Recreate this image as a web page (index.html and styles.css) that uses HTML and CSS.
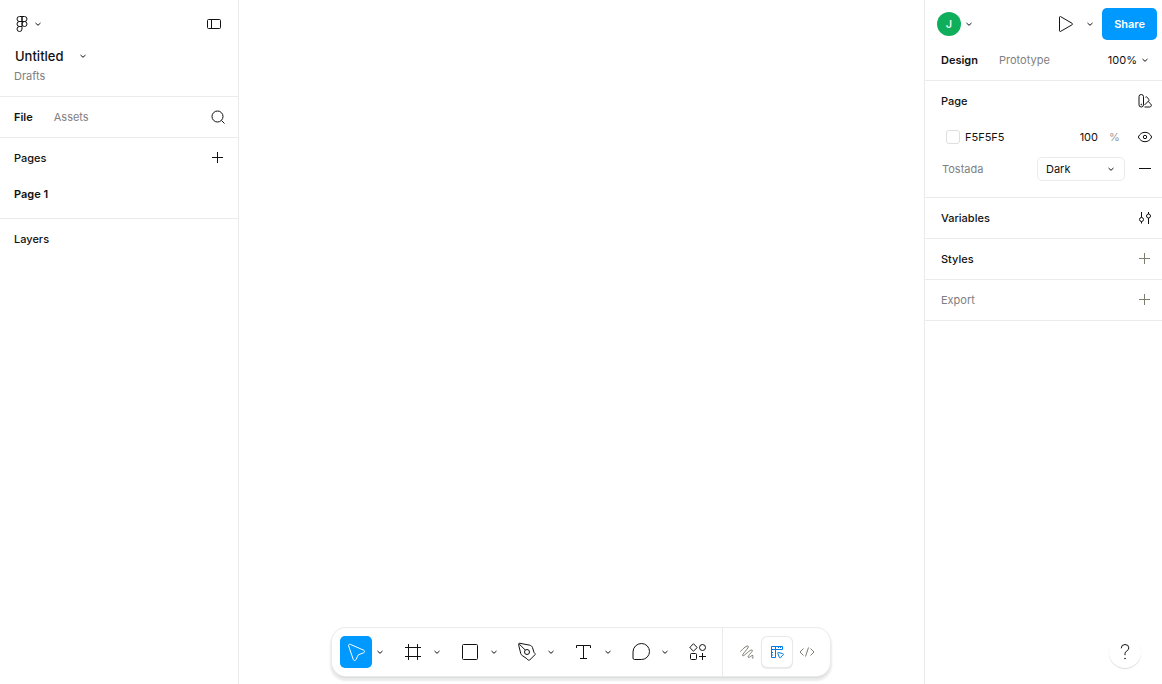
FILE: index.html
```html
<!DOCTYPE html>
<html lang="en">
<head>
<meta charset="utf-8">
<meta name="viewport" content="width=device-width, initial-scale=1">
<title>Untitled</title>
<link rel="stylesheet" href="styles.css">
</head>
<body>
<svg class="defs" aria-hidden="true">
  <symbol id="chevron" viewBox="0 0 8 8"><path d="M1.5 3 4 5.3 6.5 3"/></symbol>
  <symbol id="plus" viewBox="0 0 24 24"><path d="M11.500 6v11M6 11.500h11"/></symbol>
</svg>
<div class="app">
  <aside class="panel left">
    <header class="file-header">
      <div class="row bar">
        <button class="menu" aria-label="Main menu">
          <svg class="icon" viewBox="0 0 24 24"><path d="M12 4.500H9.500a2.500 2.500 0 0 0 0 5H12zM12 4.500h2.500a2.500 2.500 0 0 1 0 5H12zM12 9.500H9.500a2.500 2.500 0 0 0 0 5H12zM12 14.500H9.500a2.500 2.500 0 1 0 2.500 2.500z"/><circle cx="14.500" cy="12" r="2.500"/></svg>
          <svg class="chev"><use href="#chevron"/></svg>
        </button>
        <button aria-label="Minimize UI"><svg class="icon" viewBox="0 0 24 24"><rect x="5.500" y="7.500" width="13" height="9" rx="1"/><path d="M9.500 7.500v9"/></svg></button>
      </div>
      <button class="title">Untitled <svg class="chev"><use href="#chevron"/></svg></button>
      <a class="muted location" href="#">Drafts</a>
    </header>
    <section class="row section">
      <nav class="tabs"><a class="active" href="#">File</a><a class="muted" href="#">Assets</a></nav>
      <button aria-label="Find"><svg class="icon" viewBox="0 0 24 24"><circle cx="11.500" cy="11.500" r="5.500"/><path d="m15.500 15.500 3 3"/></svg></button>
    </section>
    <section class="pages">
      <div class="row line"><h2>Pages</h2><button aria-label="Add new page"><svg class="icon"><use href="#plus"/></svg></button></div>
      <a class="page" href="#">Page 1</a>
    </section>
    <section class="row line"><h2>Layers</h2></section>
  </aside>

  <main class="canvas"></main>

  <aside class="panel right">
    <header class="user-header">
      <div class="row bar">
        <button class="user" aria-label="Account"><span class="avatar">J</span><svg class="chev"><use href="#chevron"/></svg></button>
        <div class="actions">
          <button aria-label="Present"><svg class="icon" viewBox="0 0 24 24"><path d="M5.500 5.200v13.600c0 .6.600.9 1.100.6l11.600-6.700c.5-.3.500-1 0-1.300L6.600 4.600c-.5-.3-1.100 0-1.100.6z"/></svg></button>
          <button class="chev-button" aria-label="Present options"><svg class="chev"><use href="#chevron"/></svg></button>
          <button class="share">Share</button>
        </div>
      </div>
      <div class="row mode-row">
        <nav class="tabs"><a class="active" href="#">Design</a><a class="muted" href="#">Prototype</a></nav>
        <button class="zoom">100% <svg class="chev"><use href="#chevron"/></svg></button>
      </div>
    </header>
    <section class="page-props">
      <div class="row line"><h2>Page</h2><button aria-label="Apply styles"><svg class="icon" viewBox="0 0 24 24"><rect x="6" y="5.500" width="4.500" height="12.500" rx="2.200"/><path d="M12.500 8.200q1-.8 1.800.2l1.500 2.100q.5.700-.1 1.300L11.500 16M15.200 12.500l2.500 2.400q.8.900.6 1.800-.3 1.300-1.800 1.300h-5"/><circle cx="8.300" cy="15.500" r=".4"/></svg></button></div>
      <div class="fill-row">
        <span class="swatch"></span>
        <input class="hex" aria-label="Color" value="F5F5F5">
        <input class="opacity" aria-label="Opacity" value="100">
        <span class="percent">%</span>
        <button aria-label="Hide"><svg class="icon" viewBox="0 0 24 24"><path d="M5.300 12q2.300-4.700 6.700-4.700t6.700 4.700q-2.300 4.700-6.700 4.700T5.300 12z"/><circle cx="12" cy="12" r="1.700"/></svg></button>
      </div>
      <div class="mode">
        <label class="muted" for="theme">Tostada</label>
        <div class="select-box"><select id="theme"><option>Dark</option><option>Light</option></select><svg class="chev"><use href="#chevron"/></svg></div>
        <button aria-label="Remove mode"><svg class="icon" viewBox="0 0 24 24"><path d="M6 11.500h12"/></svg></button>
      </div>
    </section>
    <section class="row section"><h2>Variables</h2><button aria-label="Open variables"><svg class="icon" viewBox="0 0 24 24"><path d="M8.500 6v5.500M8.500 15.500v2M15.500 6v2M15.500 12v6"/><circle cx="8.500" cy="13.500" r="2"/><circle cx="15.500" cy="10" r="2"/></svg></button></section>
    <section class="row section"><h2>Styles</h2><button class="subtle" aria-label="Add style"><svg class="icon"><use href="#plus"/></svg></button></section>
    <section class="row section"><h2 class="muted">Export</h2><button class="subtle" aria-label="Add export"><svg class="icon"><use href="#plus"/></svg></button></section>
  </aside>
</div>

<div class="toolbar" role="toolbar" aria-label="Tools">
  <div class="tools">
    <div class="tool"><button class="selected" aria-label="Move"><svg viewBox="0 0 32 32"><path d="m8.600 9.900 4.700 13.700c.5 1.300 2 1.300 2.600.1l2.400-4.900 5.300-2c1.300-.5 1.300-2.100.1-2.600L10.200 8.300c-1-.4-1.900.5-1.600 1.600z"/></svg></button><button class="chev-button" aria-label="Move tools"><svg class="chev"><use href="#chevron"/></svg></button></div>
    <div class="tool"><button aria-label="Frame"><svg viewBox="0 0 32 32"><path d="M11.500 8v16M20.500 8v16M8 11.500h16M8 20.500h16"/></svg></button><button class="chev-button" aria-label="Region tools"><svg class="chev"><use href="#chevron"/></svg></button></div>
    <div class="tool"><button aria-label="Rectangle"><svg viewBox="0 0 32 32"><rect x="8.500" y="8.500" width="15" height="15" rx="1"/></svg></button><button class="chev-button" aria-label="Shape tools"><svg class="chev"><use href="#chevron"/></svg></button></div>
    <div class="tool"><button aria-label="Pen"><svg viewBox="0 0 32 32"><path d="m7.600 8.700 2.100 8.600c.2.900.7 1.700 1.500 2.200l4.700 3.200 1.300 1.300c.5.500 1 .5 1.500 0l5.200-5.200c.5-.5.400-1-.1-1.500l-.8-.9-1.500-4.800c-.4-1.300-1.400-2.100-2.700-2.400L9 7.300c-1-.2-1.600.4-1.400 1.400zM8 7.800l6.200 6.200"/><circle cx="16" cy="16" r="2.500"/></svg></button><button class="chev-button" aria-label="Drawing tools"><svg class="chev"><use href="#chevron"/></svg></button></div>
    <div class="tool"><button aria-label="Text"><svg viewBox="0 0 32 32"><path d="M8.500 12V9.500h14V12M15.500 9.500v13M12 22.500h7"/></svg></button><button class="chev-button" aria-label="Text tools"><svg class="chev"><use href="#chevron"/></svg></button></div>
    <div class="tool"><button aria-label="Comment"><svg viewBox="0 0 32 32"><path d="M16.500 7.500a8 8 0 1 1 0 16H9.500q-1.500 0-1.500-1.500v-6A8.500 8.500 0 0 1 16.500 7.500z"/></svg></button><button class="chev-button" aria-label="Comment tools"><svg class="chev"><use href="#chevron"/></svg></button></div>
    <button aria-label="Actions"><svg viewBox="0 0 32 32"><path d="m11.500 7.800 3.200 3.200c.4.400.4.600 0 1l-3.200 3.200L8.200 12c-.4-.4-.4-.6 0-1zM20.500 17v7M17 20.500h7"/><circle cx="20.500" cy="11.500" r="3"/><rect x="8.500" y="17.500" width="6" height="6" rx="1"/></svg></button>
  </div>
  <div class="modes">
    <button class="subtle" aria-label="Draw"><svg viewBox="0 0 30 30"><path d="M8.500 14.500C11.500 11 15 8.300 16.200 9.200c1.500 1.200-6.700 8.300-5.500 9.500 1.200 1.100 7.700-7 9.500-5.600 1.400 1.200-5.200 6-4 7.200 1 .9 4-2.800 4.800-1.700.6.900-1.200 1.800-.5 2.600q.5.400 1-.2"/></svg></button>
    <button class="current" aria-label="Design"><svg viewBox="0 0 30 30"><path d="M9.500 9.500h11v3h-7v8h-4zM9.500 12.500h4v-3M16.500 9.500V11M18.500 9.500V11M9.500 15.500H11M9.500 18H11M16.300 15.500l4.400 1.100c1 .3 1.100 1 .2 1.600l-1.200.8-.8 1.300c-.5.900-1.300.9-1.600 0l-1.500-4.100c-.2-.5 0-.8.500-.7z"/></svg></button>
    <button class="subtle" aria-label="Dev Mode"><svg viewBox="0 0 30 30"><path d="m11.500 11.500-3.500 3.500 3.500 3.500M18.500 11.500 22 15l-3.500 3.500M16.500 10.500l-3 9"/></svg></button>
  </div>
</div>
<button class="help" aria-label="Help"><svg viewBox="0 0 32 32"><path d="M12.200 12.300q.1-3.800 3.800-3.800 3.800 0 3.800 3.400 0 1.800-1.900 3Q16 16 16 17.500v1.700"/><circle cx="16" cy="22.500" r=".4"/></svg></button>
</body>
</html>
```
FILE: styles.css
```css
* { box-sizing: border-box; }

body {
  margin: 0;
  background: #fff;
  color: #111;
  font: 500 11px/16px Inter, "Liberation Sans", sans-serif;
}

button, input, select {
  margin: 0;
  padding: 0;
  border: 0;
  background: none;
  color: inherit;
  font: inherit;
}

button { display: flex; align-items: center; flex: none; }
a { color: inherit; text-decoration: none; }
h2 { margin: 0; font-size: 11px; font-weight: 500; }

svg { display: block; fill: none; stroke: currentColor; stroke-width: 1; stroke-linejoin: round; }
.defs { position: absolute; width: 0; height: 0; }
.icon { width: 24px; height: 24px; }
.chev { width: 8px; height: 8px; }
h2.muted, .muted { color: #808080; font-weight: 400; }
.subtle { color: #7c7f70; }

.app { display: grid; grid-template-columns: 239px 1fr 238px; min-height: 100vh; }
.left { border-right: 1px solid #ebebeb; }
.right { border-left: 1px solid #ebebeb; }
.row { display: flex; align-items: center; justify-content: space-between; }
.bar { height: 48px; }
.line { height: 40px; }
.section { height: 41px; border-bottom: 1px solid #ebebeb; }
.tabs { display: flex; gap: 21px; }
.tabs .active { font-weight: 600; }

.left .row { padding: 0 8px 0 14px; }
.left .bar { padding: 0 12px 0 10px; }
.file-header { height: 97px; border-bottom: 1px solid #ebebeb; }
.title { gap: 15px; margin-left: 15px; font-size: 13px; }
.location { display: block; margin: 4px 14px; }
.pages { padding-bottom: 8px; border-bottom: 1px solid #ebebeb; }
.page { display: block; padding: 8px 14px; font-weight: 600; }

.right .row { padding: 0 5px 0 16px; }
.right .bar { padding: 0 5px 0 12px; }
.user { gap: 4px; }
.avatar { width: 24px; height: 24px; border-radius: 50%; background: #0fae5b; color: #fff; line-height: 24px; text-align: center; }
.actions { display: flex; align-items: center; }
.chev-button { justify-content: center; width: 16px; height: 32px; }
.actions .chev-button { width: 24px; }
.share { height: 32px; padding: 0 12px; border-radius: 5px; background: #09f; color: #fff; font-weight: 600; }
.user-header { height: 81px; border-bottom: 1px solid #ebebeb; }
.mode-row { height: 24px; }
.zoom { gap: 4px; margin-right: 8px; font-weight: 400; }

.page-props { padding-bottom: 14px; border-bottom: 1px solid #ebebeb; }
.fill-row { display: flex; align-items: center; height: 32px; padding: 0 5px 0 21px; font-weight: 400; }
.swatch { flex: none; width: 14px; height: 14px; border: 1px solid #dcdfdc; border-radius: 3px; }
.hex { flex: 1; min-width: 0; margin-left: 5px; }
.opacity { width: 32px; text-align: right; }
.percent { width: 24px; margin-left: 11px; color: #999; }
.mode { display: grid; grid-template-columns: 1fr 88px 24px; column-gap: 8px; align-items: center; height: 30px; padding: 2px 5px 0 17px; font-weight: 400; }
.select-box { display: grid; grid-template-columns: 1fr 17px; align-items: center; height: 24px; border: 1px solid #ebebeb; border-radius: 5px; }
.select-box select { grid-area: 1 / 1 / 2 / 3; height: 22px; padding-left: 8px; appearance: none; }
.select-box .chev { grid-area: 1 / 2; pointer-events: none; }

.toolbar {
  position: fixed;
  bottom: 8px;
  left: 50%;
  display: flex;
  height: 48px;
  transform: translateX(-50%);
  border-radius: 14px;
  background: #fff;
  box-shadow: 0 0 0 1px #ebebeb, 0 2px 1px #d8dcda, 0 3px 2px 2px #ebebeb;
}
.toolbar svg:not(.chev), .help svg { width: 100%; height: 100%; }
.tools { display: flex; align-items: center; gap: 9px; padding: 0 8px; border-right: 1px solid #ebebeb; }
.tools button:not(.chev-button) { width: 32px; height: 32px; }
.tool { display: flex; }
.toolbar .selected { border-radius: 5px; background: #09f; color: #fff; }
.modes { display: flex; align-items: center; padding: 0 8px 0 9px; }
.modes button { width: 30px; height: 30px; }
.modes .current { border-radius: 5px; box-shadow: 0 0 0 1px #e6e9e8, 0 1px 1px 1px #ebebeb; color: #007be5; }

.help { position: fixed; right: 21px; bottom: 16px; width: 32px; height: 32px; border-radius: 50%; background: #fff; box-shadow: 0 1px 1px #dcdcdc; }
```
